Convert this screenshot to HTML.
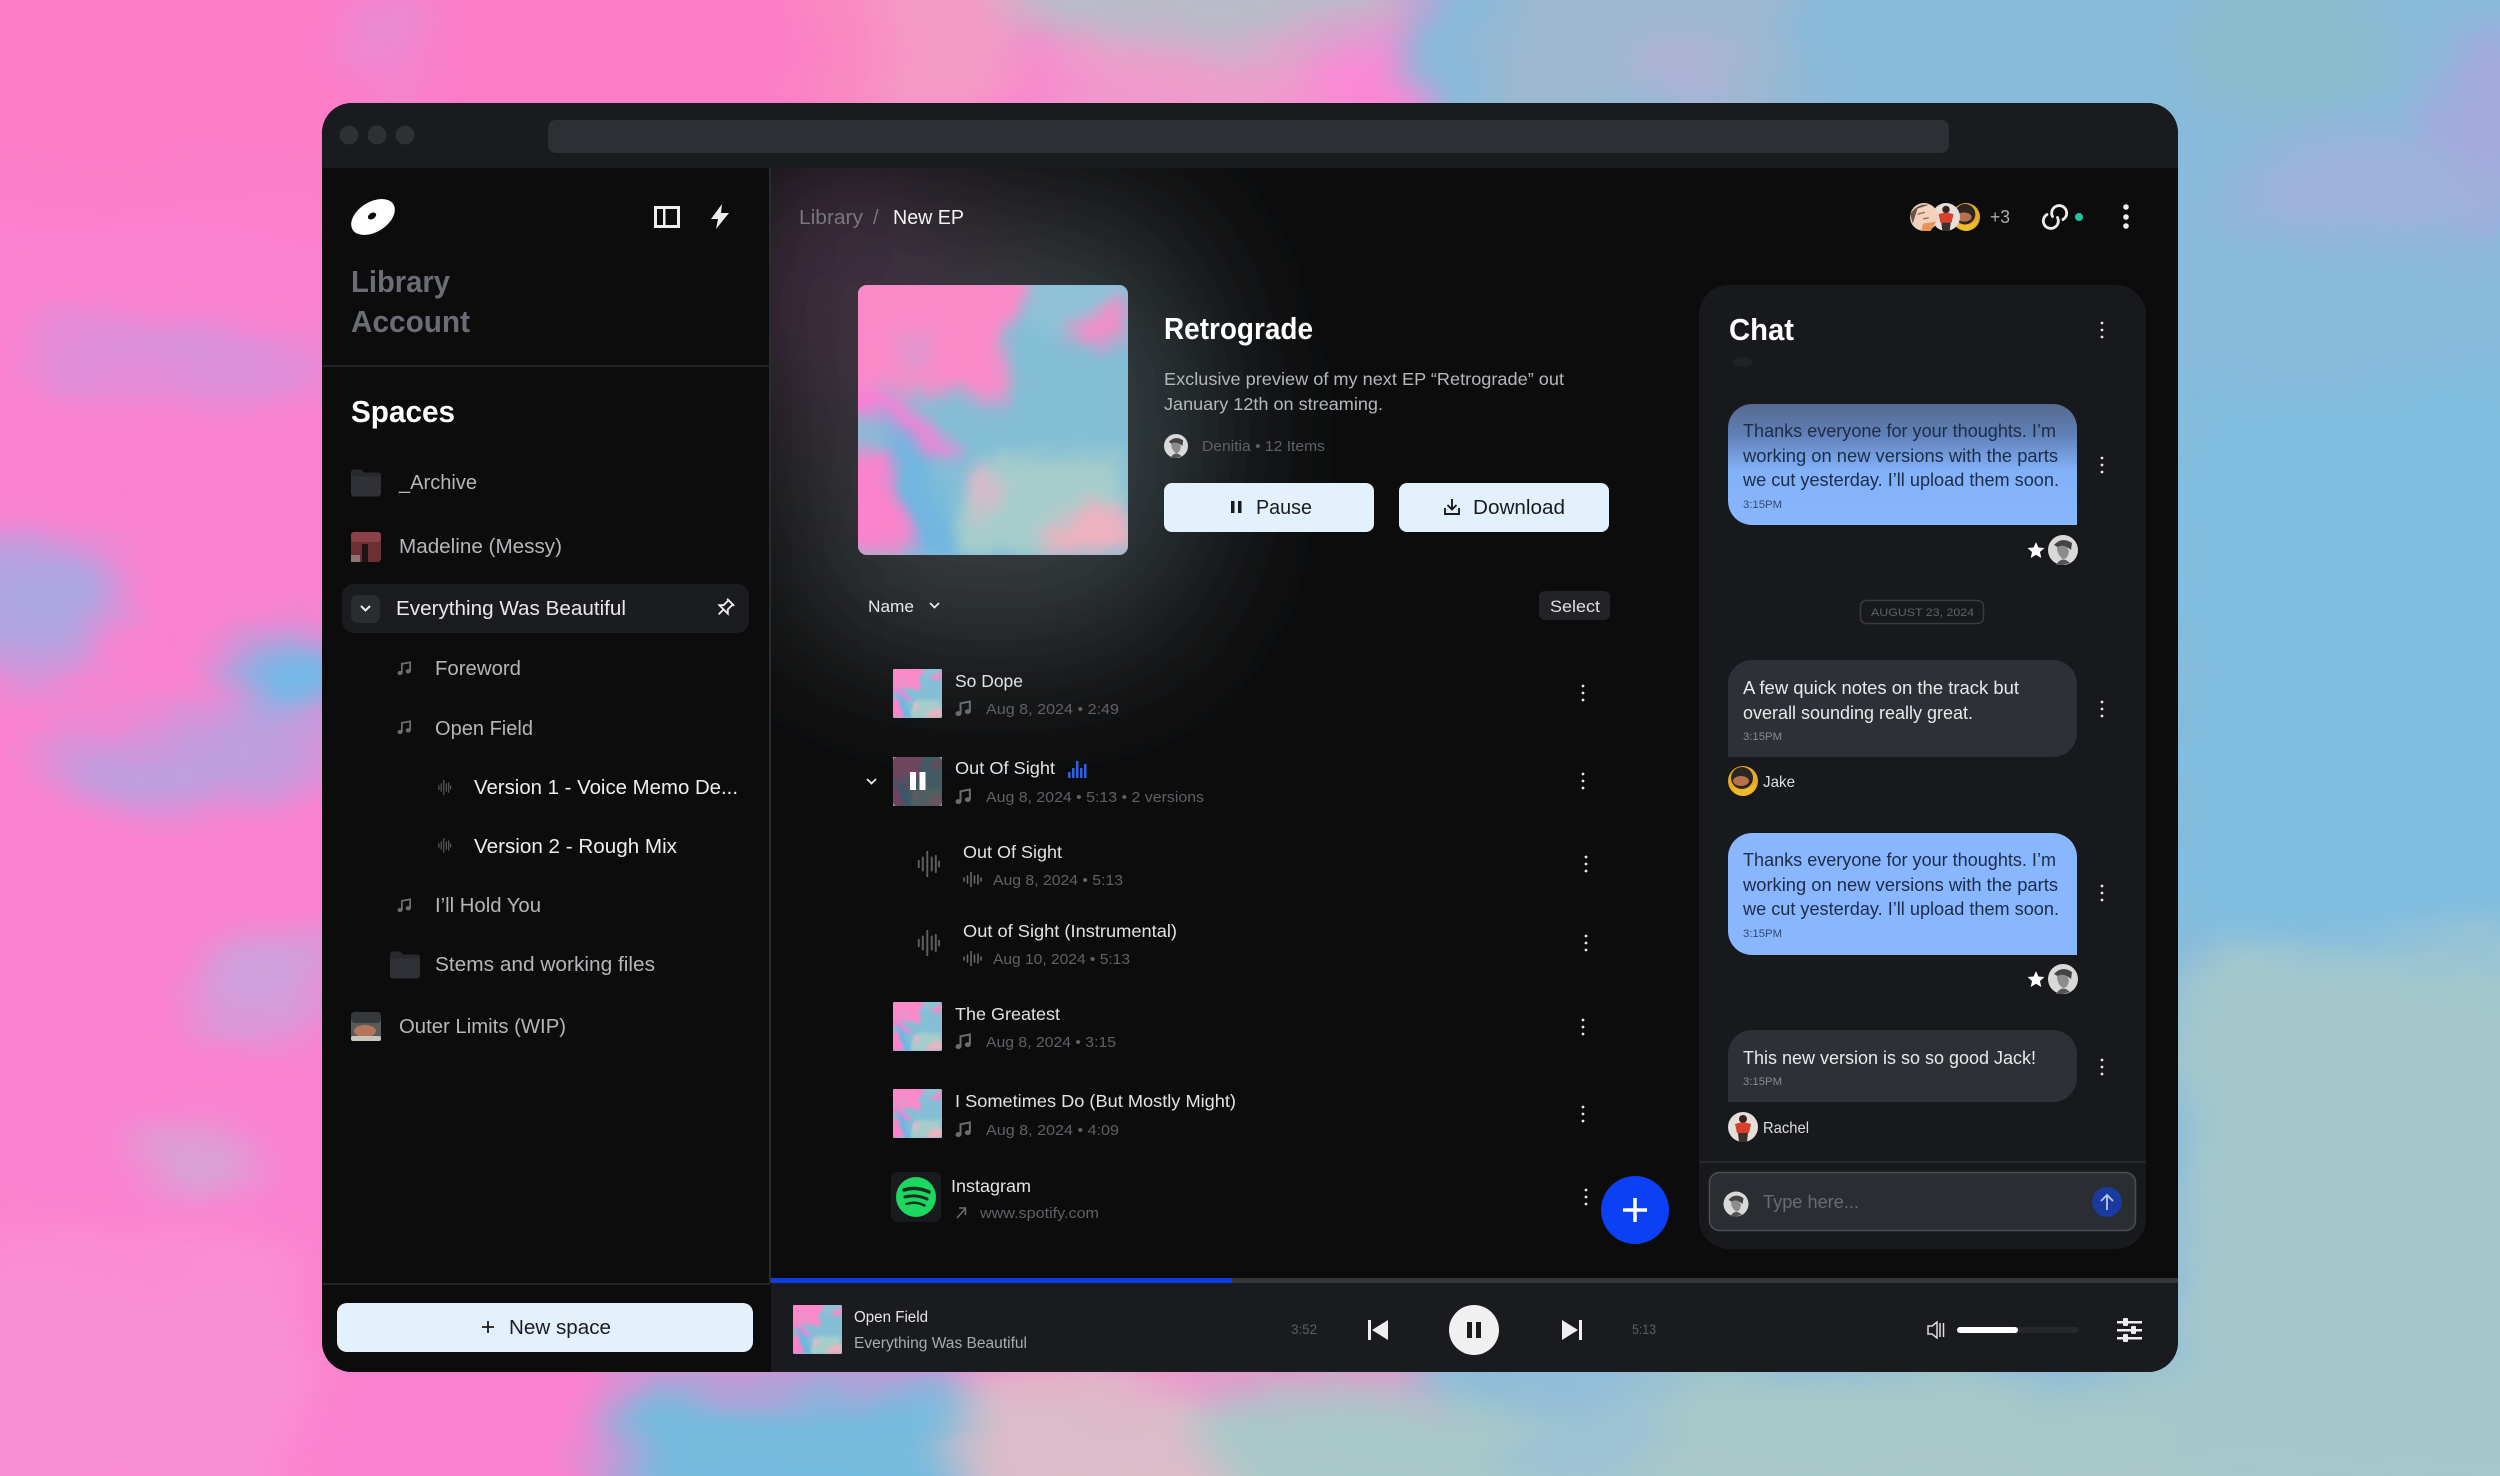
<!DOCTYPE html>
<html lang="en"><head><meta charset="utf-8"><title>Retrograde</title>
<style>
html,body{margin:0;padding:0;background:#0c0c0d;width:2500px;height:1476px;overflow:hidden}
svg{display:block}
text{font-family:"Liberation Sans",sans-serif;white-space:pre}
.t{font-size:17.5px;fill:#e2e3e4}
.m{font-size:15px;fill:#5f6166}
.s{font-size:20px;fill:#b4b6b9}
.c{font-size:18px;fill:#1d2c47}
.d{font-size:18px;fill:#e9e9ea}
.h{font-size:11px;fill:#34496e}
.g{font-size:11px;fill:#888a8e}
</style></head><body>
<svg xmlns="http://www.w3.org/2000/svg" width="2500" height="1476" viewBox="0 0 2500 1476">
<defs>
<filter id="bg" filterUnits="userSpaceOnUse" x="-100" y="-100" width="2700" height="1620" color-interpolation-filters="sRGB"><feGaussianBlur stdDeviation="22" result="s"/><feTurbulence type="fractalNoise" baseFrequency="0.005 0.011" numOctaves="4" seed="7" result="n"/><feDisplacementMap in="s" in2="n" scale="80" xChannelSelector="R" yChannelSelector="G"/><feGaussianBlur stdDeviation="6"/></filter>
<filter id="glow" filterUnits="userSpaceOnUse" x="300" y="-300" width="1500" height="1400"><feGaussianBlur stdDeviation="75"/></filter>
<filter id="a8" x="-30%" y="-30%" width="160%" height="160%" color-interpolation-filters="sRGB"><feGaussianBlur stdDeviation="9" result="s"/><feTurbulence type="fractalNoise" baseFrequency="0.018" numOctaves="3" seed="4" result="n"/><feDisplacementMap in="s" in2="n" scale="26" xChannelSelector="R" yChannelSelector="G"/></filter>
<clipPath id="win"><rect x="322" y="103" width="1856" height="1269" rx="30"/></clipPath>
<clipPath id="mainc"><rect x="771" y="168" width="1407" height="1110"/></clipPath>
<clipPath id="ac"><rect width="270" height="270" rx="9"/></clipPath>
<linearGradient id="bub" x1="0" y1="0" x2="0" y2="1"><stop offset="0" stop-color="#57698f"/><stop offset=".25" stop-color="#5f80b6"/><stop offset=".55" stop-color="#82b1f8"/><stop offset="1" stop-color="#88b6ff"/></linearGradient>
<symbol id="art" viewBox="0 0 270 270"><g clip-path="url(#ac)">
<rect width="270" height="270" fill="#84bfd6"/>
<g filter="url(#a8)">
<path d="M-20-20H180L168 20 140 50 150 100 135 125 100 100 60 110-20 100Z" fill="#fb8ac9"/>
<path d="M30 50L72 42 78 85 45 95Z" fill="#e495cd"/>
<path d="M210 45L250 12 270 8V55L235 68Z" fill="#f38dc6"/>
<path d="M-20 95L40 115 105 165 85 172 30 140-20 135Z" fill="#fa7fd4"/>
<path d="M-20 165H25L60 225 70 270H-20Z" fill="#fb83cb"/>
<path d="M22 130L70 165 100 270H55L35 200Z" fill="#70b6e0"/>
<path d="M95 220L150 170H270V230L190 270H110Z" fill="#a6cdcb"/>
<path d="M105 195L130 180 140 225 120 235Z" fill="#dfb8c8"/>
<path d="M190 245L240 212 270 220V270H185Z" fill="#eeb2c0"/>
<path d="M170-10H270V12L205 45 175 40Z" fill="#8fc2d6"/>
</g></g></symbol>
<symbol id="note" viewBox="0 0 16 16"><path d="M5.2 12.6V3.1L14 1.4v9.4" fill="none" stroke="#6b6d71" stroke-width="1.9"/><ellipse cx="3.2" cy="12.8" rx="2.7" ry="2.3" fill="#6b6d71"/><ellipse cx="12" cy="11" rx="2.7" ry="2.3" fill="#6b6d71"/></symbol>
<symbol id="wave" viewBox="0 0 28 32"><path d="M2 12v8M7 8v16M12.500 0v32M18 8v16M23 6v20M27 13v6" fill="none" stroke="#5c5e62" stroke-width="2.400" stroke-linecap="round"/></symbol>
<symbol id="wave2" viewBox="0 0 19 15"><path d="M1 6v3M4.500 4v7M8 0v15M11.500 4v7M15 3v9M18 6v3" fill="none" stroke="#6b6d71" stroke-width="1.500" stroke-linecap="round"/></symbol>
<symbol id="dots" viewBox="0 0 6 20"><circle cx="3" cy="3" r="1.400" fill="#e6e6e6"/><circle cx="3" cy="10" r="1.400" fill="#e6e6e6"/><circle cx="3" cy="17" r="1.400" fill="#e6e6e6"/></symbol>
<symbol id="folder" viewBox="0 0 30 28"><path d="M0 4a3 3 0 0 1 3-3h7l3 3h14a3 3 0 0 1 3 3v18a3 3 0 0 1-3 3H3a3 3 0 0 1-3-3Z" fill="#2f3136"/><path d="M0 4a3 3 0 0 1 3-3h7l3 3h14a3 3 0 0 1 3 3v1H0Z" fill="#27292d"/></symbol>
<symbol id="man" viewBox="0 0 30 30"><circle cx="15" cy="15" r="15" fill="#d9d9d9"/><path d="M6 10Q14 1 24 8L23 15Q16 9 11 13Z" fill="#444"/><path d="M9 12Q18 8 21 16 20 24 15 24 9 20 9 12Z" fill="#8c8c8c"/><path d="M8 30Q14 20 22 28L15 30Z" fill="#555"/></symbol>
<symbol id="jake" viewBox="0 0 30 30"><circle cx="15" cy="15" r="15" fill="#e8aa22"/><circle cx="14" cy="12" r="11" fill="#2c2622"/><ellipse cx="13" cy="15" rx="8" ry="5" fill="#b9704c"/><path d="M3 21Q15 27 28 18 24 30 15 30 7 29 3 21Z" fill="#f0bb2a"/></symbol>
<symbol id="rachel" viewBox="0 0 30 30"><circle cx="15" cy="15" r="15" fill="#e5dfda"/><circle cx="15" cy="7" r="4" fill="#3b221c"/><path d="M7 12Q15 9 23 12L21 21H9Z" fill="#d8402c"/><path d="M10 21h10l-1 9h-8Z" fill="#3a302e"/></symbol>
<symbol id="woman" viewBox="0 0 30 30"><circle cx="15" cy="15" r="15" fill="#f2d2bc"/><path d="M0 12Q8 0 20 2L8 6 3 22Z" fill="#6a5446"/><path d="M14 22l14-2-6 10H12Z" fill="#ea9458"/><path d="M8 12l8-2M14 17l6-1" stroke="#9a6c5a" stroke-width="1.500"/></symbol>
</defs>

<!-- backdrop -->
<rect width="2500" height="1476" fill="#fc82cf"/>
<rect x="700" y="1462" width="240" height="14" fill="#74bbde"/>
<rect x="950" y="1462" width="250" height="14" fill="#dcbcc8"/>
<rect x="1200" y="1462" width="1300" height="14" fill="#a9c8c8"/>
<g filter="url(#bg)">
<rect x="1420" y="-100" width="1200" height="1620" fill="#88badb"/>
<rect x="1180" y="1372" width="1440" height="148" fill="#a9c8c8"/>
<rect x="950" y="1376" width="260" height="144" fill="#dcbcc8"/>
<rect x="610" y="1380" width="350" height="140" fill="#74bbde"/>
<ellipse cx="1580" cy="1440" rx="90" ry="70" fill="#9dc2d4"/>
<rect x="2180" y="950" width="440" height="570" fill="#a6c8cc"/>
<rect x="2180" y="380" width="440" height="570" fill="#80bde0"/>
<ellipse cx="2480" cy="130" rx="50" ry="120" fill="#a4aadc"/>
<ellipse cx="2370" cy="190" rx="130" ry="50" fill="#9fb2dc"/>
<ellipse cx="2290" cy="50" rx="110" ry="70" fill="#8bbccb"/>
<rect x="1000" y="-100" width="400" height="150" fill="#b9bcc8"/>
<rect x="1050" y="50" width="330" height="80" fill="#ee9ccc"/>
<ellipse cx="1360" cy="85" rx="55" ry="45" fill="#fb88d5"/>
<rect x="800" y="-100" width="210" height="220" fill="#f59ac4"/>
<ellipse cx="395" cy="40" rx="45" ry="60" fill="#d69ce2"/>
<rect x="1500" y="-100" width="300" height="220" fill="#9db8cf"/>
<ellipse cx="1690" cy="85" rx="55" ry="35" fill="#b3b2d3"/>
<ellipse cx="40" cy="600" rx="95" ry="75" fill="#aca6e2"/>
<ellipse cx="290" cy="670" rx="65" ry="48" fill="#6cbce8"/>
<ellipse cx="190" cy="760" rx="150" ry="45" fill="#bda0e0"/>
<ellipse cx="180" cy="355" rx="160" ry="20" fill="#c69ae2"/>
<ellipse cx="260" cy="985" rx="70" ry="42" fill="#cba2dc"/>
<ellipse cx="200" cy="1165" rx="75" ry="34" fill="#d4a6d8"/>
<rect x="-100" y="-100" width="980" height="300" fill="#fe78bf" opacity=".5"/>
<rect x="-100" y="1250" width="400" height="270" fill="#f895d6" opacity=".7"/>
</g>

<!-- window -->
<g clip-path="url(#win)">
<rect x="322" y="103" width="1856" height="1269" fill="#0c0c0d"/>
<!-- glow -->
<g clip-path="url(#mainc)"><g filter="url(#glow)">
<rect x="800" y="210" width="380" height="440" rx="90" fill="#383c41"/>
<ellipse cx="850" cy="290" rx="120" ry="150" fill="#433343"/>
<ellipse cx="1130" cy="430" rx="80" ry="140" fill="#354346"/>
</g></g>
<!-- title bar -->
<rect x="322" y="103" width="1856" height="65" fill="#1a1b1f"/>
<circle cx="349" cy="135" r="9.500" fill="#2f3034"/><circle cx="377" cy="135" r="9.500" fill="#2f3034"/><circle cx="405" cy="135" r="9.500" fill="#2f3034"/>
<rect x="548" y="120" width="1401" height="33" rx="8" fill="#2e2f34"/>
<!-- sidebar -->
<rect x="322" y="168" width="448" height="1204" fill="#0c0c0d"/>
<rect x="769" y="168" width="2" height="1115" fill="#2a2b2f"/>
<ellipse cx="373" cy="217" rx="24" ry="15" transform="rotate(-32 373 217)" fill="#fff"/>
<ellipse cx="372" cy="216" rx="4.500" ry="3" transform="rotate(-32 372 216)" fill="#0c0c0d"/>
<rect x="655.500" y="207.500" width="23" height="19" fill="none" stroke="#eee" stroke-width="3"/><rect x="663" y="207" width="2.500" height="20" fill="#eee"/>
<polygon points="722,204 711,219 718,219 716,229 729,213 721,213" fill="#eee"/>
<text x="351" y="292" font-size="31" font-weight="700" fill="#6a6e74" textLength="99" lengthAdjust="spacingAndGlyphs">Library</text>
<text x="351" y="332" font-size="31" font-weight="700" fill="#6a6e74" textLength="119" lengthAdjust="spacingAndGlyphs">Account</text>
<rect x="322" y="365" width="448" height="2" fill="#232428"/>
<text x="351" y="422" font-size="31" font-weight="700" fill="#fff" textLength="104" lengthAdjust="spacingAndGlyphs">Spaces</text>

<use href="#folder" x="351" y="468" width="30" height="29"/>
<text class="s" x="399" y="489" textLength="78" lengthAdjust="spacingAndGlyphs">_Archive</text>
<rect x="351" y="532" width="30" height="30" rx="3" fill="#6b2f34"/><rect x="351" y="532" width="30" height="10" rx="3" fill="#8c4147"/><rect x="362" y="544" width="6" height="18" fill="#1d1416"/><rect x="351" y="555" width="9" height="7" fill="#8f7474"/>
<text class="s" x="399" y="553" textLength="163" lengthAdjust="spacingAndGlyphs">Madeline (Messy)</text>
<rect x="342" y="584" width="407" height="49" rx="12" fill="#1b1c20"/>
<rect x="351" y="595" width="29" height="28" rx="7" fill="#2a2c30"/>
<path d="M361 606l4.500 4.500 4.500-4.500" fill="none" stroke="#eee" stroke-width="2"/>
<text x="396" y="615" font-size="20" fill="#e9e9ea" textLength="230" lengthAdjust="spacingAndGlyphs">Everything Was Beautiful</text>
<g transform="translate(0 34) rotate(45 725 574)" fill="none" stroke="#eee" stroke-width="1.800"><path d="M720 566h10M722 566v7l-3 3h12l-3-3v-7M725 576v7"/></g>

<use href="#note" x="397" y="661" width="15" height="15"/>
<text class="s" x="435" y="675" textLength="86" lengthAdjust="spacingAndGlyphs">Foreword</text>
<use href="#note" x="397" y="720" width="15" height="15"/>
<text class="s" x="435" y="735" textLength="98" lengthAdjust="spacingAndGlyphs">Open Field</text>
<use href="#wave" x="436" y="780" width="17" height="15"/>
<text x="474" y="794" font-size="20" fill="#eeeeef" textLength="264" lengthAdjust="spacingAndGlyphs">Version 1 - Voice Memo De...</text>
<use href="#wave" x="436" y="838" width="17" height="15"/>
<text x="474" y="853" font-size="20" fill="#eeeeef" textLength="203" lengthAdjust="spacingAndGlyphs">Version 2 - Rough Mix</text>
<use href="#note" x="397" y="898" width="15" height="15"/>
<text class="s" x="435" y="912" textLength="106" lengthAdjust="spacingAndGlyphs">I’ll Hold You</text>
<use href="#folder" x="390" y="950" width="30" height="29"/>
<text class="s" x="435" y="971" textLength="220" lengthAdjust="spacingAndGlyphs">Stems and working files</text>
<rect x="351" y="1012" width="30" height="29" rx="4" fill="#5a5a58"/><rect x="351" y="1012" width="30" height="11" rx="4" fill="#35383a"/><ellipse cx="365" cy="1031" rx="11" ry="6" fill="#b3765a"/><rect x="351" y="1036" width="30" height="5" rx="2" fill="#c9c4ba"/>
<text class="s" x="399" y="1033" textLength="167" lengthAdjust="spacingAndGlyphs">Outer Limits (WIP)</text>

<rect x="322" y="1283" width="448" height="2" fill="#232428"/>
<rect x="337" y="1303" width="416" height="49" rx="10" fill="#e3f1fd"/>
<path d="M482 1327h12M488 1321v12" stroke="#1a1b1f" stroke-width="1.800"/>
<text x="509" y="1334" font-size="20" fill="#1a1b1f" textLength="102" lengthAdjust="spacingAndGlyphs">New space</text>

<!-- header -->
<text x="799" y="224" font-size="20" fill="#76787c" textLength="64" lengthAdjust="spacingAndGlyphs">Library</text>
<text x="873" y="224" font-size="20" fill="#76787c">/</text>
<text x="893" y="224" font-size="20" fill="#f2f2f2" textLength="71" lengthAdjust="spacingAndGlyphs">New EP</text>
<use href="#jake" x="1952" y="203" width="28" height="28"/>
<use href="#rachel" x="1932" y="203" width="28" height="28"/>
<use href="#woman" x="1910" y="203" width="28" height="28"/>
<text x="1990" y="223" font-size="18" fill="#a9abae" textLength="20" lengthAdjust="spacingAndGlyphs">+3</text>
<g fill="none" stroke="#eee" stroke-width="2.800" stroke-linecap="round"><path d="M2052.500 216.500A7.500 7.500 0 1 1 2063 219.500"/><path d="M2057.500 217.500A7.500 7.500 0 1 1 2047 214.500"/></g>
<circle cx="2079" cy="217" r="4" fill="#20c3a0"/>
<circle cx="2126" cy="207" r="2.800" fill="#eee"/><circle cx="2126" cy="217" r="2.800" fill="#eee"/><circle cx="2126" cy="226" r="2.800" fill="#eee"/>

<!-- album header -->
<use href="#art" x="858" y="285" width="270" height="270"/>
<text x="1164" y="339" font-size="31" font-weight="700" fill="#fff" textLength="149" lengthAdjust="spacingAndGlyphs">Retrograde</text>
<text x="1164" y="385" font-size="17.5" fill="#b4b7bb" textLength="400" lengthAdjust="spacingAndGlyphs">Exclusive preview of my next EP “Retrograde” out</text>
<text x="1164" y="410" font-size="17.5" fill="#b4b7bb" textLength="219" lengthAdjust="spacingAndGlyphs">January 12th on streaming.</text>
<use href="#man" x="1164" y="434" width="24" height="24"/>
<text class="m" x="1202" y="451" textLength="123" lengthAdjust="spacingAndGlyphs">Denitia • 12 Items</text>
<rect x="1164" y="483" width="210" height="49" rx="8" fill="#e3f1fd"/>
<rect x="1231" y="501" width="3.500" height="12" fill="#1a1b1f"/><rect x="1238" y="501" width="3.500" height="12" fill="#1a1b1f"/>
<text x="1256" y="514" font-size="20" fill="#1a1b1f" textLength="56" lengthAdjust="spacingAndGlyphs">Pause</text>
<rect x="1399" y="483" width="210" height="49" rx="8" fill="#e3f1fd"/>
<path d="M1452 499v10M1447.500 505l4.500 4.500 4.500-4.500M1445 508v6h14v-6" fill="none" stroke="#1a1b1f" stroke-width="1.900"/>
<text x="1473" y="514" font-size="20" fill="#1a1b1f" textLength="92" lengthAdjust="spacingAndGlyphs">Download</text>

<text x="868" y="612" font-size="17" fill="#e8e8e8" textLength="46" lengthAdjust="spacingAndGlyphs">Name</text>
<path d="M930 603l4.500 4.500 4.500-4.500" fill="none" stroke="#e8e8e8" stroke-width="1.800"/>
<rect x="1539" y="591" width="71" height="29" rx="6" fill="#222326"/>
<text x="1550" y="612" font-size="17" fill="#e0e0e0" textLength="50" lengthAdjust="spacingAndGlyphs">Select</text>

<!-- tracks -->
<use href="#art" x="893" y="669" width="49" height="49"/>
<text class="t" x="955" y="687" textLength="68" lengthAdjust="spacingAndGlyphs">So Dope</text>
<use href="#note" x="955" y="700" width="17" height="17"/>
<text class="m" x="986" y="714" textLength="133" lengthAdjust="spacingAndGlyphs">Aug 8, 2024 • 2:49</text>
<use href="#dots" x="1580" y="683" width="6" height="20"/>

<path d="M867 779l4.500 4.500 4.500-4.500" fill="none" stroke="#e8e8e8" stroke-width="1.800"/>
<use href="#art" x="893" y="757" width="49" height="49"/>
<rect x="893" y="757" width="49" height="49" rx="4" fill="#1a1b1f" opacity=".62"/>
<rect x="910" y="772" width="6" height="18" fill="#fff"/><rect x="919.500" y="772" width="6" height="18" fill="#fff"/>
<text class="t" x="955" y="774" textLength="100" lengthAdjust="spacingAndGlyphs">Out Of Sight</text>
<g fill="#2f62dc"><rect x="1068" y="772" width="2.500" height="6"/><rect x="1072" y="768" width="2.500" height="10"/><rect x="1076" y="761" width="2.500" height="17"/><rect x="1080" y="768" width="2.500" height="10"/><rect x="1084" y="764" width="2.500" height="14"/></g>
<use href="#note" x="955" y="788" width="17" height="17"/>
<text class="m" x="986" y="802" textLength="218" lengthAdjust="spacingAndGlyphs">Aug 8, 2024 • 5:13 • 2 versions</text>
<use href="#dots" x="1580" y="771" width="6" height="20"/>

<use href="#wave" x="915" y="851" width="27" height="26"/>
<text class="t" x="963" y="858" textLength="99" lengthAdjust="spacingAndGlyphs">Out Of Sight</text>
<use href="#wave2" x="963" y="872" width="19" height="15"/>
<text class="m" x="993" y="885" textLength="130" lengthAdjust="spacingAndGlyphs">Aug 8, 2024 • 5:13</text>
<use href="#dots" x="1583" y="854" width="6" height="20"/>

<use href="#wave" x="915" y="930" width="27" height="26"/>
<text class="t" x="963" y="937" textLength="214" lengthAdjust="spacingAndGlyphs">Out of Sight (Instrumental)</text>
<use href="#wave2" x="963" y="951" width="19" height="15"/>
<text class="m" x="993" y="964" textLength="137" lengthAdjust="spacingAndGlyphs">Aug 10, 2024 • 5:13</text>
<use href="#dots" x="1583" y="933" width="6" height="20"/>

<use href="#art" x="893" y="1002" width="49" height="49"/>
<text class="t" x="955" y="1020" textLength="105" lengthAdjust="spacingAndGlyphs">The Greatest</text>
<use href="#note" x="955" y="1033" width="17" height="17"/>
<text class="m" x="986" y="1047" textLength="130" lengthAdjust="spacingAndGlyphs">Aug 8, 2024 • 3:15</text>
<use href="#dots" x="1580" y="1017" width="6" height="20"/>

<use href="#art" x="893" y="1089" width="49" height="49"/>
<text class="t" x="955" y="1107" textLength="281" lengthAdjust="spacingAndGlyphs">I Sometimes Do (But Mostly Might)</text>
<use href="#note" x="955" y="1121" width="17" height="17"/>
<text class="m" x="986" y="1135" textLength="133" lengthAdjust="spacingAndGlyphs">Aug 8, 2024 • 4:09</text>
<use href="#dots" x="1580" y="1104" width="6" height="20"/>

<rect x="891" y="1172" width="50" height="50" rx="6" fill="#191a1d"/>
<circle cx="916" cy="1197" r="20" fill="#1ed760"/>
<g fill="none" stroke="#13301d" stroke-linecap="round"><path d="M904 1190q12-4 25 2" stroke-width="3.500"/><path d="M905 1197q11-3 22 2" stroke-width="3"/><path d="M906.500 1204q9-3 18 1.500" stroke-width="2.500"/></g>
<text class="t" x="951" y="1192" textLength="80" lengthAdjust="spacingAndGlyphs">Instagram</text>
<path d="M957 1218l8-9M959 1208h6.500v7" fill="none" stroke="#6b6d71" stroke-width="1.500"/>
<text class="m" x="980" y="1218" textLength="119" lengthAdjust="spacingAndGlyphs">www.spotify.com</text>
<use href="#dots" x="1583" y="1187" width="6" height="20"/>

<circle cx="1635" cy="1210" r="34" fill="#0b40f5"/>
<path d="M1623 1210h24M1635 1198v24" stroke="#fff" stroke-width="3.500"/>

<!-- chat -->
<rect x="1699" y="285" width="447" height="964" rx="30" fill="#18191d"/>
<text x="1729" y="340" font-size="31" font-weight="700" fill="#fff" textLength="65" lengthAdjust="spacingAndGlyphs">Chat</text>
<use href="#dots" x="2099" y="320" width="6" height="20"/>
<ellipse cx="1743" cy="362" rx="10" ry="5" fill="#212226"/>

<path d="M1752 404H2053A24 24 0 0 1 2077 428V525H1752A24 24 0 0 1 1728 501V428A24 24 0 0 1 1752 404Z" fill="url(#bub)"/>
<text class="c" x="1743" y="437" textLength="313" lengthAdjust="spacingAndGlyphs">Thanks everyone for your thoughts. I’m</text>
<text class="c" x="1743" y="462" textLength="315" lengthAdjust="spacingAndGlyphs">working on new versions with the parts</text>
<text class="c" x="1743" y="486" textLength="316" lengthAdjust="spacingAndGlyphs">we cut yesterday. I’ll upload them soon.</text>
<text class="h" x="1743" y="508" textLength="39" lengthAdjust="spacingAndGlyphs">3:15PM</text>
<use href="#dots" x="2099" y="455" width="6" height="20"/>
<polygon transform="translate(0 19)" points="2036,523 2038.400,528.500 2044.500,529 2040,533 2041.300,539 2036,535.800 2030.700,539 2032,533 2027.500,529 2033.600,528.500" fill="#fff"/>
<use href="#man" x="2048" y="535" width="30" height="30"/>

<rect x="1860.500" y="600.500" width="123" height="23" rx="6" fill="none" stroke="#3a3b3f" stroke-width="1.500"/>
<text x="1871" y="616" font-size="11" fill="#5f6166" textLength="103" lengthAdjust="spacingAndGlyphs">AUGUST 23, 2024</text>

<path d="M1752 660H2053A24 24 0 0 1 2077 684V733A24 24 0 0 1 2053 757H1728V684A24 24 0 0 1 1752 660Z" fill="#2d3036"/>
<text class="d" x="1743" y="694" textLength="276" lengthAdjust="spacingAndGlyphs">A few quick notes on the track but</text>
<text class="d" x="1743" y="719" textLength="230" lengthAdjust="spacingAndGlyphs">overall sounding really great.</text>
<text class="g" x="1743" y="740" textLength="39" lengthAdjust="spacingAndGlyphs">3:15PM</text>
<use href="#dots" x="2099" y="699" width="6" height="20"/>
<use href="#jake" x="1728" y="766" width="30" height="30"/>
<text x="1763" y="787" font-size="16" fill="#dedfe0" textLength="32" lengthAdjust="spacingAndGlyphs">Jake</text>

<path d="M1752 833H2053A24 24 0 0 1 2077 857V955H1752A24 24 0 0 1 1728 931V857A24 24 0 0 1 1752 833Z" fill="#88b6ff"/>
<text class="c" x="1743" y="866" textLength="313" lengthAdjust="spacingAndGlyphs">Thanks everyone for your thoughts. I’m</text>
<text class="c" x="1743" y="891" textLength="315" lengthAdjust="spacingAndGlyphs">working on new versions with the parts</text>
<text class="c" x="1743" y="915" textLength="316" lengthAdjust="spacingAndGlyphs">we cut yesterday. I’ll upload them soon.</text>
<text class="h" x="1743" y="937" textLength="39" lengthAdjust="spacingAndGlyphs">3:15PM</text>
<use href="#dots" x="2099" y="883" width="6" height="20"/>
<polygon points="2036,971 2038.400,976.500 2044.500,977 2040,981 2041.300,987 2036,983.800 2030.700,987 2032,981 2027.500,977 2033.600,976.500" fill="#fff"/>
<use href="#man" x="2048" y="964" width="30" height="30"/>

<path d="M1752 1030H2053A24 24 0 0 1 2077 1054V1078A24 24 0 0 1 2053 1102H1728V1054A24 24 0 0 1 1752 1030Z" fill="#2d3036"/>
<text class="d" x="1743" y="1064" textLength="293" lengthAdjust="spacingAndGlyphs">This new version is so so good Jack!</text>
<text class="g" x="1743" y="1085" textLength="39" lengthAdjust="spacingAndGlyphs">3:15PM</text>
<use href="#dots" x="2099" y="1057" width="6" height="20"/>
<use href="#rachel" x="1728" y="1112" width="30" height="30"/>
<text x="1763" y="1133" font-size="16" fill="#dedfe0" textLength="46" lengthAdjust="spacingAndGlyphs">Rachel</text>

<rect x="1699" y="1161" width="447" height="2" fill="#26272b"/>
<rect x="1709.500" y="1172.500" width="426" height="58" rx="10" fill="#2a2d31" stroke="#4b4e53" stroke-width="1.500"/>
<use href="#man" x="1723.500" y="1191.500" width="25" height="25"/>
<text x="1763" y="1208" font-size="18.500" fill="#686b70" textLength="96" lengthAdjust="spacingAndGlyphs">Type here...</text>
<circle cx="2107" cy="1202" r="15" fill="#1a3aa0"/>
<path d="M2107 1210v-15M2101 1201l6-6 6 6" fill="none" stroke="#b9c9f2" stroke-width="1.800"/>

<!-- player -->
<rect x="771" y="1278" width="1407" height="94" fill="#1a1b1f"/>
<rect x="771" y="1278" width="1407" height="5" fill="#33353a"/>
<rect x="771" y="1278" width="461" height="5" fill="#0a3de8"/>
<use href="#art" x="793" y="1305" width="49" height="49"/>
<text x="854" y="1322" font-size="15.500" fill="#e6e6e6" textLength="74" lengthAdjust="spacingAndGlyphs">Open Field</text>
<text x="854" y="1348" font-size="15.500" fill="#a9abae" textLength="173" lengthAdjust="spacingAndGlyphs">Everything Was Beautiful</text>
<text x="1291" y="1334" font-size="14" fill="#5c5e62" textLength="26" lengthAdjust="spacingAndGlyphs">3:52</text>
<rect x="1368" y="1320" width="3" height="20" fill="#eee"/><polygon points="1388,1320 1388,1340 1372,1330" fill="#eee"/>
<circle cx="1474" cy="1330" r="25" fill="#f0f0f0"/>
<rect x="1467" y="1322" width="5" height="16" fill="#1a1b1f"/><rect x="1476" y="1322" width="5" height="16" fill="#1a1b1f"/>
<polygon points="1562,1320 1562,1340 1578,1330" fill="#eee"/><rect x="1579" y="1320" width="3" height="20" fill="#eee"/>
<text x="1632" y="1334" font-size="14" fill="#5c5e62" textLength="24" lengthAdjust="spacingAndGlyphs">5:13</text>
<path d="M1928 1326h4l5-4v16l-5-4h-4ZM1940 1323v14M1943.500 1323v14" fill="none" stroke="#ddd" stroke-width="1.500"/>
<rect x="1957" y="1327" width="122" height="6" rx="3" fill="#26272b"/>
<rect x="1957" y="1327" width="61" height="6" rx="3" fill="#fff"/>
<g fill="#eee"><rect x="2117" y="1321" width="25" height="2.500"/><rect x="2117" y="1329" width="25" height="2.500"/><rect x="2117" y="1337" width="25" height="2.500"/><rect x="2123" y="1318" width="5" height="8" rx="1"/><rect x="2131" y="1326" width="5" height="8" rx="1"/><rect x="2123" y="1334" width="5" height="8" rx="1"/></g>
</g>
</svg>
</body></html>
